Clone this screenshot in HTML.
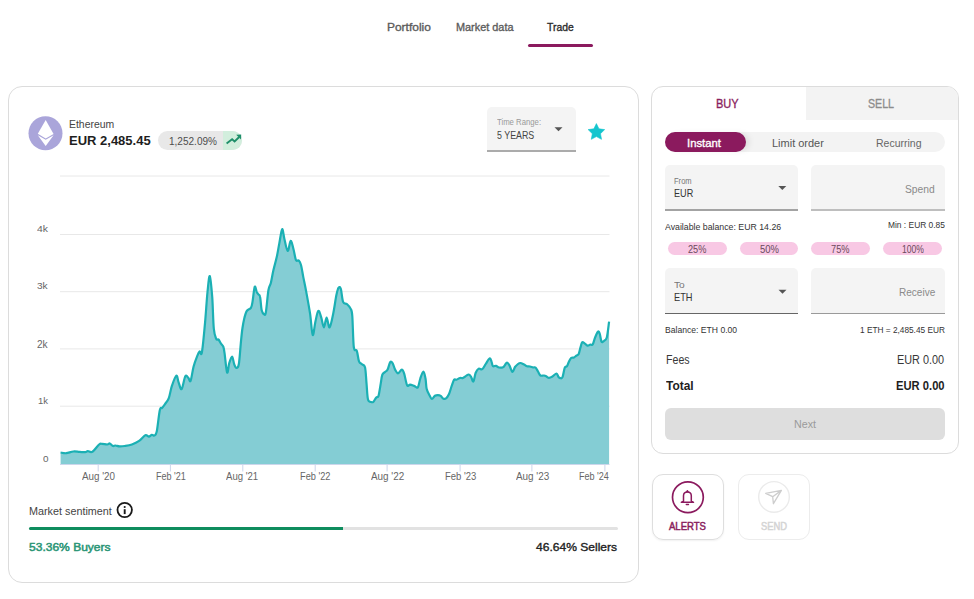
<!DOCTYPE html>
<html><head><meta charset="utf-8">
<style>
html,body{margin:0;padding:0;background:#fff;width:974px;height:599px;overflow:hidden;position:relative;font-family:"Liberation Sans",sans-serif;}
.t{position:absolute;white-space:nowrap;line-height:1;transform-origin:0 0;}
.a{position:absolute;box-sizing:border-box;}
svg{position:absolute;left:0;top:0;}
</style></head><body>
<!-- nav underline -->
<div class="a" style="left:527.5px;top:43.5px;width:65px;height:3px;border-radius:2px;background:#8b1a5e"></div>

<!-- left card -->
<div class="a" style="left:8px;top:86px;width:631px;height:497px;border:1px solid #dcdcdc;border-radius:14px;"></div>

<!-- badge -->
<div class="a" style="left:158.4px;top:130.9px;width:84px;height:19px;border-radius:10px;background:#e8e8e8;overflow:hidden">
  <div class="a" style="left:64.6px;top:0;width:20px;height:19px;background:#d2eedd"></div>
</div>

<!-- time range -->
<div class="a" style="left:487px;top:106.5px;width:88.6px;height:45.5px;background:#f4f4f4;border-radius:5px 5px 0 0;border-bottom:2px solid #ababab"></div>

<!-- market sentiment bars -->
<div class="a" style="left:28.5px;top:526.6px;width:589px;height:3px;border-radius:2px;background:#e2e2e2"></div>
<div class="a" style="left:28.5px;top:526.6px;width:314px;height:3px;border-radius:2px 0 0 2px;background:#0e8d5e"></div>

<!-- right panel -->
<div class="a" style="left:651px;top:86px;width:308px;height:368px;border:1px solid #dcdcdc;border-radius:12px;overflow:hidden">
  <div class="a" style="left:153.5px;top:0;width:160px;height:33px;background:#f3f3f3"></div>
</div>
<!-- segmented -->
<div class="a" style="left:664.7px;top:131.7px;width:280.3px;height:20.6px;border-radius:10.3px;background:#f3f3f3"></div>
<div class="a" style="left:664.7px;top:132.1px;width:81px;height:19.8px;border-radius:10px;background:#8b1a5e;box-shadow:5px 0 6px -2px rgba(0,0,0,0.10)"></div>
<!-- fields -->
<div class="a" style="left:664.9px;top:164.9px;width:133.4px;height:44.3px;background:#f4f4f4;border-radius:5px 5px 0 0"></div>
<div class="a" style="left:664.9px;top:209.2px;width:133.4px;height:1.7px;background:#a3a3a3"></div>
<div class="a" style="left:811.4px;top:164.9px;width:133.6px;height:44.3px;background:#f4f4f4;border-radius:5px 5px 0 0"></div>
<div class="a" style="left:811.4px;top:209.2px;width:133.6px;height:1.7px;background:#bebebe"></div>
<div class="a" style="left:664.9px;top:268.3px;width:133.4px;height:44.3px;background:#f4f4f4;border-radius:5px 5px 0 0"></div>
<div class="a" style="left:664.9px;top:312.6px;width:133.4px;height:1.7px;background:#666"></div>
<div class="a" style="left:811.4px;top:268.3px;width:133.6px;height:44.3px;background:#f4f4f4;border-radius:5px 5px 0 0"></div>
<div class="a" style="left:811.4px;top:312.6px;width:133.6px;height:1.7px;background:#9a9a9a"></div>
<!-- pills -->
<div class="a" style="left:668.2px;top:242.4px;width:58.7px;height:12.8px;border-radius:7px;background:#f8c8e4"></div>
<div class="a" style="left:739.7px;top:242.4px;width:58.7px;height:12.8px;border-radius:7px;background:#f8c8e4"></div>
<div class="a" style="left:811.4px;top:242.4px;width:58.5px;height:12.8px;border-radius:7px;background:#f8c8e4"></div>
<div class="a" style="left:883.1px;top:242.4px;width:58.7px;height:12.8px;border-radius:7px;background:#f8c8e4"></div>
<!-- next -->
<div class="a" style="left:665px;top:407.8px;width:280px;height:32.2px;border-radius:6px;background:#dedede"></div>

<!-- alerts / send -->
<div class="a" style="left:651.7px;top:474px;width:72px;height:66px;border:1px solid #dedede;border-radius:11px;box-shadow:0 1px 2px rgba(0,0,0,0.06)"></div>
<div class="a" style="left:737.9px;top:474px;width:72px;height:66px;border:1px solid #ececec;border-radius:11px;"></div>

<svg width="974" height="599" viewBox="0 0 974 599">
<line x1="60" y1="176" x2="609.5" y2="176" stroke="#e8e8e8" stroke-width="1"/>
<line x1="60" y1="234.5" x2="609.5" y2="234.5" stroke="#e8e8e8" stroke-width="1"/>
<line x1="60" y1="291.7" x2="609.5" y2="291.7" stroke="#e8e8e8" stroke-width="1"/>
<line x1="60" y1="348.9" x2="609.5" y2="348.9" stroke="#e8e8e8" stroke-width="1"/>
<line x1="60" y1="406.2" x2="609.5" y2="406.2" stroke="#e8e8e8" stroke-width="1"/>
<path d="M60.6,452.5 C61.5,452.6 64.1,453.4 66.2,453.2 C68.3,453.0 71.2,451.7 73.4,451.5 C75.6,451.3 77.6,451.8 79.6,451.9 C81.6,452.0 83.8,452.3 85.2,452.2 C86.6,452.1 86.6,451.3 87.8,451.2 C89.0,451.1 90.5,452.8 92.4,451.7 C94.3,450.6 97.5,445.8 99.1,444.5 C100.7,443.2 100.7,443.8 102.1,443.8 C103.5,443.8 106.0,444.6 107.3,444.5 C108.6,444.4 108.9,443.2 109.8,443.5 C110.7,443.8 112.0,445.7 112.9,446.0 C113.9,446.3 114.4,445.4 115.5,445.5 C116.6,445.6 118.1,446.3 119.6,446.4 C121.1,446.5 122.7,446.3 124.7,446.0 C126.8,445.7 129.5,445.4 131.9,444.5 C134.3,443.6 136.9,442.4 139.1,440.9 C141.3,439.4 143.7,436.0 145.3,435.3 C146.9,434.6 147.8,436.7 148.9,436.6 C150.0,436.5 151.0,435.0 151.9,434.8 C152.8,434.6 153.7,436.0 154.5,435.4 C155.3,434.8 155.9,435.4 156.8,431.2 C157.7,427.0 158.9,414.1 159.8,410.2 C160.7,406.3 161.1,408.9 162.0,407.9 C162.9,406.9 163.9,405.7 165.0,404.1 C166.1,402.5 167.7,401.1 168.8,398.1 C169.9,395.1 170.6,389.9 171.8,386.1 C173.1,382.4 175.2,376.2 176.3,375.6 C177.4,375.0 177.7,380.1 178.6,382.3 C179.5,384.6 180.5,390.1 181.6,389.1 C182.7,388.1 184.2,378.2 185.3,376.3 C186.4,374.4 187.4,377.1 188.3,377.8 C189.2,378.6 189.7,382.7 190.6,380.8 C191.5,378.9 192.5,370.6 193.6,366.5 C194.7,362.4 196.1,358.8 197.1,356.3 C198.1,353.8 198.7,352.2 199.5,351.5 C200.3,350.8 201.0,357.2 201.9,352.3 C202.8,347.4 204.2,332.2 205.1,322.1 C206.0,312.1 206.7,299.7 207.5,292.0 C208.3,284.3 209.0,275.3 209.8,276.1 C210.6,276.9 211.5,288.0 212.2,296.7 C212.9,305.4 213.1,321.5 213.8,328.5 C214.5,335.5 215.4,336.9 216.2,338.8 C217.0,340.7 217.8,338.8 218.6,339.6 C219.4,340.4 220.2,342.4 221.0,343.6 C221.8,344.8 222.7,345.1 223.3,346.7 C223.9,348.3 224.0,349.0 224.6,353.3 C225.2,357.6 226.3,370.8 227.1,372.5 C227.9,374.2 228.4,365.9 229.2,363.3 C230.0,360.7 231.3,356.6 232.1,356.7 C232.9,356.8 233.5,362.3 234.2,364.2 C234.9,366.1 235.5,367.9 236.3,367.9 C237.1,367.9 238.1,368.3 238.8,364.2 C239.6,360.1 240.2,349.2 240.8,343.3 C241.4,337.4 241.8,332.6 242.4,328.5 C243.0,324.4 243.5,321.6 244.2,318.7 C244.9,315.8 245.6,312.9 246.7,311.1 C247.8,309.3 249.9,309.3 250.9,307.8 C251.9,306.3 251.9,305.4 252.5,301.9 C253.1,298.4 254.0,288.6 254.7,286.9 C255.4,285.2 256.1,290.6 256.7,291.9 C257.3,293.1 257.8,293.6 258.4,294.4 C259.0,295.2 259.6,294.2 260.1,296.9 C260.7,299.5 261.0,307.4 261.7,310.3 C262.4,313.2 263.5,314.2 264.2,314.5 C264.9,314.8 265.2,316.1 265.9,312.0 C266.6,307.9 267.6,295.1 268.4,290.2 C269.2,285.3 270.1,286.0 270.9,282.7 C271.7,279.4 272.4,274.5 273.4,270.2 C274.4,265.9 275.8,261.3 276.8,256.8 C277.8,252.3 278.4,248.0 279.3,243.4 C280.2,238.8 281.3,230.0 282.1,229.2 C282.9,228.4 283.4,234.8 284.3,238.4 C285.2,242.0 286.6,250.5 287.7,250.9 C288.8,251.3 289.7,241.2 290.7,240.9 C291.7,240.6 292.6,246.1 293.5,249.3 C294.4,252.5 295.1,258.2 296.0,260.1 C296.9,262.0 298.0,259.7 298.8,260.5 C299.6,261.3 300.2,262.2 301.0,265.0 C301.8,267.8 302.4,272.6 303.3,277.1 C304.2,281.6 305.2,286.1 306.3,292.1 C307.4,298.1 308.9,306.1 310.0,313.2 C311.1,320.3 311.8,333.5 312.7,335.0 C313.6,336.5 314.4,326.2 315.3,322.2 C316.2,318.2 317.3,311.6 318.3,310.9 C319.3,310.1 320.4,314.9 321.3,317.7 C322.2,320.4 323.0,327.4 323.9,327.4 C324.8,327.4 325.7,317.7 326.6,317.7 C327.6,317.7 328.5,328.1 329.6,327.4 C330.7,326.6 332.2,318.6 333.3,313.2 C334.4,307.8 335.5,299.4 336.4,295.1 C337.3,290.8 337.9,288.6 338.6,287.6 C339.4,286.6 340.1,286.7 340.9,289.1 C341.6,291.5 342.1,299.4 343.1,301.9 C344.1,304.4 345.6,303.0 346.9,304.1 C348.1,305.2 349.7,306.6 350.6,308.6 C351.5,310.6 351.8,309.6 352.3,316.0 C352.8,322.4 353.1,341.2 353.8,347.0 C354.6,352.8 355.9,348.4 356.8,350.8 C357.7,353.2 358.1,359.1 359.0,361.3 C359.9,363.6 361.0,363.3 362.0,364.3 C363.0,365.3 364.2,364.2 365.0,367.3 C365.8,370.4 366.0,377.7 366.5,383.1 C367.0,388.5 367.2,396.5 368.0,399.6 C368.8,402.7 370.1,401.5 371.0,401.9 C371.9,402.3 372.4,402.6 373.3,401.9 C374.2,401.1 375.4,398.4 376.3,397.4 C377.2,396.4 377.8,398.3 378.5,395.9 C379.2,393.5 380.2,386.6 380.8,383.1 C381.4,379.6 381.6,376.7 382.3,374.8 C383.1,372.9 384.4,372.7 385.3,371.8 C386.2,370.9 386.8,371.2 387.6,369.6 C388.4,368.0 389.4,363.1 390.3,362.1 C391.2,361.1 392.0,362.4 392.8,363.6 C393.6,364.9 394.2,368.0 395.1,369.6 C396.0,371.2 397.0,373.3 398.1,373.3 C399.2,373.3 400.8,369.6 401.8,369.6 C402.8,369.6 403.2,370.7 404.1,373.3 C405.0,375.9 406.1,383.4 407.1,385.3 C408.1,387.2 408.9,384.5 410.1,384.6 C411.4,384.7 413.3,385.7 414.6,386.1 C415.9,386.6 416.9,388.6 417.9,387.3 C418.8,386.0 419.4,381.1 420.3,378.5 C421.2,375.9 422.5,371.5 423.4,371.5 C424.3,371.5 424.9,375.6 425.5,378.5 C426.1,381.4 426.0,386.3 426.7,389.1 C427.4,391.9 428.7,393.9 429.6,395.5 C430.5,397.1 431.0,398.9 431.9,399.0 C432.8,399.1 433.9,396.4 434.9,395.8 C435.9,395.2 436.8,395.1 437.8,395.1 C438.8,395.1 439.8,395.2 440.7,395.8 C441.6,396.4 442.1,398.0 443.0,398.4 C443.9,398.8 445.0,399.1 446.0,398.4 C447.0,397.7 447.9,396.4 448.9,394.3 C449.9,392.2 450.9,388.0 451.8,385.6 C452.7,383.2 453.3,380.7 454.1,379.7 C454.9,378.7 455.5,380.0 456.5,379.7 C457.5,379.4 458.9,378.3 460.0,378.0 C461.1,377.7 461.8,378.4 462.9,378.0 C464.0,377.6 465.4,376.2 466.4,375.6 C467.4,375.0 467.9,374.3 468.7,374.5 C469.5,374.7 470.3,375.6 471.1,376.8 C471.9,378.0 472.6,382.2 473.4,381.5 C474.2,380.8 474.8,374.8 475.7,372.7 C476.6,370.6 477.6,369.2 478.7,368.6 C479.8,368.0 481.0,370.0 482.2,369.2 C483.4,368.4 484.5,365.8 485.7,364.0 C486.9,362.2 488.5,358.9 489.5,358.5 C490.5,358.1 490.9,360.3 491.5,361.6 C492.1,362.9 492.2,365.5 493.0,366.2 C493.8,366.9 495.0,365.6 496.0,365.8 C497.0,366.0 497.8,367.3 499.0,367.5 C500.2,367.7 502.0,367.6 503.0,367.2 C504.0,366.8 504.3,365.8 505.0,365.0 C505.7,364.2 506.2,362.4 507.0,362.5 C507.8,362.6 508.6,363.9 509.5,365.5 C510.4,367.1 511.6,371.8 512.5,372.0 C513.4,372.2 514.1,368.3 515.0,367.0 C515.9,365.7 517.1,364.7 518.0,364.0 C518.9,363.3 519.5,362.9 520.5,363.0 C521.5,363.1 522.9,364.0 524.0,364.5 C525.1,365.0 526.0,365.9 527.0,366.2 C528.0,366.5 529.0,366.3 530.0,366.5 C531.0,366.7 532.1,367.3 533.0,367.5 C533.9,367.7 534.7,366.8 535.5,367.5 C536.3,368.2 537.2,370.2 538.0,371.5 C538.8,372.8 539.5,374.8 540.5,375.5 C541.5,376.2 543.0,375.3 544.0,375.5 C545.0,375.7 545.7,376.1 546.5,376.5 C547.3,376.9 548.0,377.8 549.0,377.8 C550.0,377.8 551.2,377.2 552.5,376.5 C553.8,375.8 555.5,373.4 556.5,373.5 C557.5,373.6 557.8,376.2 558.5,377.0 C559.2,377.8 559.8,378.2 560.5,378.2 C561.2,378.2 561.8,378.9 562.5,377.2 C563.2,375.5 564.0,369.8 564.7,367.9 C565.5,366.0 566.3,367.1 567.0,366.1 C567.7,365.1 568.1,363.4 568.8,362.0 C569.5,360.6 570.2,358.8 571.1,358.0 C572.0,357.2 573.1,357.8 574.0,357.4 C574.9,357.0 575.6,356.2 576.4,355.6 C577.2,355.0 578.0,355.3 578.7,353.9 C579.4,352.5 579.9,349.3 580.5,347.4 C581.1,345.4 581.5,342.9 582.2,342.2 C582.9,341.5 583.7,342.7 584.6,343.3 C585.5,343.9 586.5,345.5 587.5,345.7 C588.5,345.9 589.5,344.7 590.4,344.5 C591.3,344.3 591.9,345.7 592.7,344.5 C593.5,343.3 594.2,339.6 595.1,337.5 C596.0,335.4 597.2,332.2 598.0,331.6 C598.8,331.0 599.2,332.3 599.8,334.0 C600.4,335.7 600.8,340.4 601.5,341.6 C602.2,342.8 603.0,341.7 603.9,341.0 C604.8,340.3 605.9,340.7 606.8,337.5 C607.7,334.3 608.7,324.3 609.1,321.7 L609.1,464 L60.6,464 Z" fill="#84cdd4"/>
<path d="M60.6,452.5 C61.5,452.6 64.1,453.4 66.2,453.2 C68.3,453.0 71.2,451.7 73.4,451.5 C75.6,451.3 77.6,451.8 79.6,451.9 C81.6,452.0 83.8,452.3 85.2,452.2 C86.6,452.1 86.6,451.3 87.8,451.2 C89.0,451.1 90.5,452.8 92.4,451.7 C94.3,450.6 97.5,445.8 99.1,444.5 C100.7,443.2 100.7,443.8 102.1,443.8 C103.5,443.8 106.0,444.6 107.3,444.5 C108.6,444.4 108.9,443.2 109.8,443.5 C110.7,443.8 112.0,445.7 112.9,446.0 C113.9,446.3 114.4,445.4 115.5,445.5 C116.6,445.6 118.1,446.3 119.6,446.4 C121.1,446.5 122.7,446.3 124.7,446.0 C126.8,445.7 129.5,445.4 131.9,444.5 C134.3,443.6 136.9,442.4 139.1,440.9 C141.3,439.4 143.7,436.0 145.3,435.3 C146.9,434.6 147.8,436.7 148.9,436.6 C150.0,436.5 151.0,435.0 151.9,434.8 C152.8,434.6 153.7,436.0 154.5,435.4 C155.3,434.8 155.9,435.4 156.8,431.2 C157.7,427.0 158.9,414.1 159.8,410.2 C160.7,406.3 161.1,408.9 162.0,407.9 C162.9,406.9 163.9,405.7 165.0,404.1 C166.1,402.5 167.7,401.1 168.8,398.1 C169.9,395.1 170.6,389.9 171.8,386.1 C173.1,382.4 175.2,376.2 176.3,375.6 C177.4,375.0 177.7,380.1 178.6,382.3 C179.5,384.6 180.5,390.1 181.6,389.1 C182.7,388.1 184.2,378.2 185.3,376.3 C186.4,374.4 187.4,377.1 188.3,377.8 C189.2,378.6 189.7,382.7 190.6,380.8 C191.5,378.9 192.5,370.6 193.6,366.5 C194.7,362.4 196.1,358.8 197.1,356.3 C198.1,353.8 198.7,352.2 199.5,351.5 C200.3,350.8 201.0,357.2 201.9,352.3 C202.8,347.4 204.2,332.2 205.1,322.1 C206.0,312.1 206.7,299.7 207.5,292.0 C208.3,284.3 209.0,275.3 209.8,276.1 C210.6,276.9 211.5,288.0 212.2,296.7 C212.9,305.4 213.1,321.5 213.8,328.5 C214.5,335.5 215.4,336.9 216.2,338.8 C217.0,340.7 217.8,338.8 218.6,339.6 C219.4,340.4 220.2,342.4 221.0,343.6 C221.8,344.8 222.7,345.1 223.3,346.7 C223.9,348.3 224.0,349.0 224.6,353.3 C225.2,357.6 226.3,370.8 227.1,372.5 C227.9,374.2 228.4,365.9 229.2,363.3 C230.0,360.7 231.3,356.6 232.1,356.7 C232.9,356.8 233.5,362.3 234.2,364.2 C234.9,366.1 235.5,367.9 236.3,367.9 C237.1,367.9 238.1,368.3 238.8,364.2 C239.6,360.1 240.2,349.2 240.8,343.3 C241.4,337.4 241.8,332.6 242.4,328.5 C243.0,324.4 243.5,321.6 244.2,318.7 C244.9,315.8 245.6,312.9 246.7,311.1 C247.8,309.3 249.9,309.3 250.9,307.8 C251.9,306.3 251.9,305.4 252.5,301.9 C253.1,298.4 254.0,288.6 254.7,286.9 C255.4,285.2 256.1,290.6 256.7,291.9 C257.3,293.1 257.8,293.6 258.4,294.4 C259.0,295.2 259.6,294.2 260.1,296.9 C260.7,299.5 261.0,307.4 261.7,310.3 C262.4,313.2 263.5,314.2 264.2,314.5 C264.9,314.8 265.2,316.1 265.9,312.0 C266.6,307.9 267.6,295.1 268.4,290.2 C269.2,285.3 270.1,286.0 270.9,282.7 C271.7,279.4 272.4,274.5 273.4,270.2 C274.4,265.9 275.8,261.3 276.8,256.8 C277.8,252.3 278.4,248.0 279.3,243.4 C280.2,238.8 281.3,230.0 282.1,229.2 C282.9,228.4 283.4,234.8 284.3,238.4 C285.2,242.0 286.6,250.5 287.7,250.9 C288.8,251.3 289.7,241.2 290.7,240.9 C291.7,240.6 292.6,246.1 293.5,249.3 C294.4,252.5 295.1,258.2 296.0,260.1 C296.9,262.0 298.0,259.7 298.8,260.5 C299.6,261.3 300.2,262.2 301.0,265.0 C301.8,267.8 302.4,272.6 303.3,277.1 C304.2,281.6 305.2,286.1 306.3,292.1 C307.4,298.1 308.9,306.1 310.0,313.2 C311.1,320.3 311.8,333.5 312.7,335.0 C313.6,336.5 314.4,326.2 315.3,322.2 C316.2,318.2 317.3,311.6 318.3,310.9 C319.3,310.1 320.4,314.9 321.3,317.7 C322.2,320.4 323.0,327.4 323.9,327.4 C324.8,327.4 325.7,317.7 326.6,317.7 C327.6,317.7 328.5,328.1 329.6,327.4 C330.7,326.6 332.2,318.6 333.3,313.2 C334.4,307.8 335.5,299.4 336.4,295.1 C337.3,290.8 337.9,288.6 338.6,287.6 C339.4,286.6 340.1,286.7 340.9,289.1 C341.6,291.5 342.1,299.4 343.1,301.9 C344.1,304.4 345.6,303.0 346.9,304.1 C348.1,305.2 349.7,306.6 350.6,308.6 C351.5,310.6 351.8,309.6 352.3,316.0 C352.8,322.4 353.1,341.2 353.8,347.0 C354.6,352.8 355.9,348.4 356.8,350.8 C357.7,353.2 358.1,359.1 359.0,361.3 C359.9,363.6 361.0,363.3 362.0,364.3 C363.0,365.3 364.2,364.2 365.0,367.3 C365.8,370.4 366.0,377.7 366.5,383.1 C367.0,388.5 367.2,396.5 368.0,399.6 C368.8,402.7 370.1,401.5 371.0,401.9 C371.9,402.3 372.4,402.6 373.3,401.9 C374.2,401.1 375.4,398.4 376.3,397.4 C377.2,396.4 377.8,398.3 378.5,395.9 C379.2,393.5 380.2,386.6 380.8,383.1 C381.4,379.6 381.6,376.7 382.3,374.8 C383.1,372.9 384.4,372.7 385.3,371.8 C386.2,370.9 386.8,371.2 387.6,369.6 C388.4,368.0 389.4,363.1 390.3,362.1 C391.2,361.1 392.0,362.4 392.8,363.6 C393.6,364.9 394.2,368.0 395.1,369.6 C396.0,371.2 397.0,373.3 398.1,373.3 C399.2,373.3 400.8,369.6 401.8,369.6 C402.8,369.6 403.2,370.7 404.1,373.3 C405.0,375.9 406.1,383.4 407.1,385.3 C408.1,387.2 408.9,384.5 410.1,384.6 C411.4,384.7 413.3,385.7 414.6,386.1 C415.9,386.6 416.9,388.6 417.9,387.3 C418.8,386.0 419.4,381.1 420.3,378.5 C421.2,375.9 422.5,371.5 423.4,371.5 C424.3,371.5 424.9,375.6 425.5,378.5 C426.1,381.4 426.0,386.3 426.7,389.1 C427.4,391.9 428.7,393.9 429.6,395.5 C430.5,397.1 431.0,398.9 431.9,399.0 C432.8,399.1 433.9,396.4 434.9,395.8 C435.9,395.2 436.8,395.1 437.8,395.1 C438.8,395.1 439.8,395.2 440.7,395.8 C441.6,396.4 442.1,398.0 443.0,398.4 C443.9,398.8 445.0,399.1 446.0,398.4 C447.0,397.7 447.9,396.4 448.9,394.3 C449.9,392.2 450.9,388.0 451.8,385.6 C452.7,383.2 453.3,380.7 454.1,379.7 C454.9,378.7 455.5,380.0 456.5,379.7 C457.5,379.4 458.9,378.3 460.0,378.0 C461.1,377.7 461.8,378.4 462.9,378.0 C464.0,377.6 465.4,376.2 466.4,375.6 C467.4,375.0 467.9,374.3 468.7,374.5 C469.5,374.7 470.3,375.6 471.1,376.8 C471.9,378.0 472.6,382.2 473.4,381.5 C474.2,380.8 474.8,374.8 475.7,372.7 C476.6,370.6 477.6,369.2 478.7,368.6 C479.8,368.0 481.0,370.0 482.2,369.2 C483.4,368.4 484.5,365.8 485.7,364.0 C486.9,362.2 488.5,358.9 489.5,358.5 C490.5,358.1 490.9,360.3 491.5,361.6 C492.1,362.9 492.2,365.5 493.0,366.2 C493.8,366.9 495.0,365.6 496.0,365.8 C497.0,366.0 497.8,367.3 499.0,367.5 C500.2,367.7 502.0,367.6 503.0,367.2 C504.0,366.8 504.3,365.8 505.0,365.0 C505.7,364.2 506.2,362.4 507.0,362.5 C507.8,362.6 508.6,363.9 509.5,365.5 C510.4,367.1 511.6,371.8 512.5,372.0 C513.4,372.2 514.1,368.3 515.0,367.0 C515.9,365.7 517.1,364.7 518.0,364.0 C518.9,363.3 519.5,362.9 520.5,363.0 C521.5,363.1 522.9,364.0 524.0,364.5 C525.1,365.0 526.0,365.9 527.0,366.2 C528.0,366.5 529.0,366.3 530.0,366.5 C531.0,366.7 532.1,367.3 533.0,367.5 C533.9,367.7 534.7,366.8 535.5,367.5 C536.3,368.2 537.2,370.2 538.0,371.5 C538.8,372.8 539.5,374.8 540.5,375.5 C541.5,376.2 543.0,375.3 544.0,375.5 C545.0,375.7 545.7,376.1 546.5,376.5 C547.3,376.9 548.0,377.8 549.0,377.8 C550.0,377.8 551.2,377.2 552.5,376.5 C553.8,375.8 555.5,373.4 556.5,373.5 C557.5,373.6 557.8,376.2 558.5,377.0 C559.2,377.8 559.8,378.2 560.5,378.2 C561.2,378.2 561.8,378.9 562.5,377.2 C563.2,375.5 564.0,369.8 564.7,367.9 C565.5,366.0 566.3,367.1 567.0,366.1 C567.7,365.1 568.1,363.4 568.8,362.0 C569.5,360.6 570.2,358.8 571.1,358.0 C572.0,357.2 573.1,357.8 574.0,357.4 C574.9,357.0 575.6,356.2 576.4,355.6 C577.2,355.0 578.0,355.3 578.7,353.9 C579.4,352.5 579.9,349.3 580.5,347.4 C581.1,345.4 581.5,342.9 582.2,342.2 C582.9,341.5 583.7,342.7 584.6,343.3 C585.5,343.9 586.5,345.5 587.5,345.7 C588.5,345.9 589.5,344.7 590.4,344.5 C591.3,344.3 591.9,345.7 592.7,344.5 C593.5,343.3 594.2,339.6 595.1,337.5 C596.0,335.4 597.2,332.2 598.0,331.6 C598.8,331.0 599.2,332.3 599.8,334.0 C600.4,335.7 600.8,340.4 601.5,341.6 C602.2,342.8 603.0,341.7 603.9,341.0 C604.8,340.3 605.9,340.7 606.8,337.5 C607.7,334.3 608.7,324.3 609.1,321.7" fill="none" stroke="#1bb0b4" stroke-width="2.2" stroke-linejoin="round"/>
<line x1="60" y1="464.5" x2="609.5" y2="464.5" stroke="#ccd6eb" stroke-width="1"/>
<line x1="98.2" y1="464.5" x2="98.2" y2="471.5" stroke="#ccd6eb" stroke-width="1"/>
<line x1="170.4" y1="464.5" x2="170.4" y2="471.5" stroke="#ccd6eb" stroke-width="1"/>
<line x1="242.8" y1="464.5" x2="242.8" y2="471.5" stroke="#ccd6eb" stroke-width="1"/>
<line x1="315.2" y1="464.5" x2="315.2" y2="471.5" stroke="#ccd6eb" stroke-width="1"/>
<line x1="387.1" y1="464.5" x2="387.1" y2="471.5" stroke="#ccd6eb" stroke-width="1"/>
<line x1="460.1" y1="464.5" x2="460.1" y2="471.5" stroke="#ccd6eb" stroke-width="1"/>
<line x1="531.9" y1="464.5" x2="531.9" y2="471.5" stroke="#ccd6eb" stroke-width="1"/>
<line x1="604.9" y1="464.5" x2="604.9" y2="471.5" stroke="#ccd6eb" stroke-width="1"/>
<circle cx="45.5" cy="133.2" r="17" fill="#aaa5da"/>
<path d="M45.7,120 L37.8,133.7 L45.7,138.4 L53.6,134 Z" fill="#fff"/>
<path d="M37.8,135.3 L45.7,139.7 L53.6,135.3 L45.7,146 Z" fill="#fff"/>
<path d="M226.6,143.4 L232.1,139.2 L234.6,141.4 L239.2,137" fill="none" stroke="#1f8f6a" stroke-width="1.9"/>
<path d="M236.2,134.8 L241.2,134.6 L241,139.6 Z" fill="#1f8f6a"/>
<path d="M554.5,127.3 L562.5,127.3 L558.5,131.3 Z" fill="#555"/>
<path d="M778.3,185.9 L786.3,185.9 L782.3,189.9 Z" fill="#555"/>
<path d="M778.5,289.8 L786.5,289.8 L782.5,293.8 Z" fill="#555"/>
<path d="M596.40,123.60 L598.93,128.82 L604.67,129.61 L600.49,133.63 L601.51,139.34 L596.40,136.60 L591.29,139.34 L592.31,133.63 L588.13,129.61 L593.87,128.82 Z" fill="#14c5ce" stroke="#14c5ce" stroke-width="0.6" stroke-linejoin="round"/>
<circle cx="124.7" cy="510" r="7.2" fill="none" stroke="#1a1a1a" stroke-width="1.8"/>
<rect x="123.75" y="509.2" width="1.9" height="4.9" fill="#1a1a1a"/><circle cx="124.7" cy="507" r="1.05" fill="#1a1a1a"/>
<circle cx="687.9" cy="497.2" r="15.4" fill="none" stroke="#8b1a5e" stroke-width="1.7"/>
<path d="M683.5,501 L683.5,495.8 C683.5,493.2 685.2,491.9 687.4,491.9 C689.6,491.9 691.3,493.2 691.3,495.8 L691.3,501 L693.5,502.3 L681.3,502.3 Z" fill="none" stroke="#8b1a5e" stroke-width="1.5" stroke-linejoin="round"/>
<path d="M686.4,492 L687.4,490 L688.4,492 Z" fill="#8b1a5e" stroke="#8b1a5e" stroke-width="0.8"/>
<path d="M686.3,504.5 L688.5,504.5" stroke="#8b1a5e" stroke-width="1.4" stroke-linecap="round"/>
<circle cx="774" cy="496.9" r="15.3" fill="none" stroke="#ebebeb" stroke-width="1.4"/>
<path d="M765.7,493.4 L781.4,490.4 L773.4,503.7 L772.7,496.7 Z M772.7,496.7 L781.4,490.4" fill="none" stroke="#cdcdcd" stroke-width="1.3" stroke-linejoin="round"/>
</svg>
<div class="t" style="left:387.40px;top:21.92px;font-size:11.19px;font-weight:400;color:#5c5c5c;-webkit-text-stroke:0.35px #5c5c5c;transform:scaleX(1.0681)" id="t0">Portfolio</div>
<div class="t" style="left:456.30px;top:21.92px;font-size:11.19px;font-weight:400;color:#5c5c5c;-webkit-text-stroke:0.35px #5c5c5c;transform:scaleX(0.9729)" id="t1">Market data</div>
<div class="t" style="left:546.70px;top:21.92px;font-size:11.19px;font-weight:400;color:#2b2b2b;-webkit-text-stroke:0.35px #2b2b2b;transform:scaleX(0.9265)" id="t2">Trade</div>
<div class="t" style="left:69.10px;top:119.54px;font-size:10.47px;font-weight:400;color:#444;transform:scaleX(0.9963)" id="t3">Ethereum</div>
<div class="t" style="left:69.20px;top:135.27px;font-size:12.79px;font-weight:700;color:#1e1e1e;transform:scaleX(1.0168)" id="t4">EUR 2,485.45</div>
<div class="t" style="left:168.70px;top:137.06px;font-size:10.32px;font-weight:400;color:#4d4d4d;transform:scaleX(0.9727)" id="t5">1,252.09%</div>
<div class="t" style="left:497.00px;top:118.06px;font-size:8.43px;font-weight:400;color:#9a9a9a;transform:scaleX(0.9197)" id="t6">Time Range:</div>
<div class="t" style="left:497.00px;top:129.57px;font-size:10.90px;font-weight:400;color:#444;transform:scaleX(0.8135)" id="t7">5 YEARS</div>
<div class="t" style="left:28.60px;top:506.01px;font-size:10.61px;font-weight:400;color:#444;transform:scaleX(1.0176)" id="t8">Market sentiment</div>
<div class="t" style="left:28.60px;top:541.52px;font-size:11.19px;font-weight:400;color:#2a9575;-webkit-text-stroke:0.5px #2a9575;transform:scaleX(1.0751)" id="t9">53.36% Buyers</div>
<div class="t" style="left:535.90px;top:541.82px;font-size:11.19px;font-weight:400;color:#222;-webkit-text-stroke:0.35px #222;transform:scaleX(1.0774)" id="t10">46.64% Sellers</div>
<div class="t" style="left:715.80px;top:97.51px;font-size:12.50px;font-weight:400;color:#8a1f5e;-webkit-text-stroke:0.35px #8a1f5e;transform:scaleX(0.8794)" id="t11">BUY</div>
<div class="t" style="left:868.30px;top:97.51px;font-size:12.50px;font-weight:400;color:#8c8c8c;-webkit-text-stroke:0.35px #8c8c8c;transform:scaleX(0.8504)" id="t12">SELL</div>
<div class="t" style="left:687.00px;top:136.65px;font-size:11.63px;font-weight:400;color:#ffffff;-webkit-text-stroke:0.35px #ffffff;transform:scaleX(0.9749)" id="t13">Instant</div>
<div class="t" style="left:772.30px;top:136.65px;font-size:11.63px;font-weight:400;color:#555;transform:scaleX(0.9448)" id="t14">Limit order</div>
<div class="t" style="left:875.70px;top:136.65px;font-size:11.63px;font-weight:400;color:#666;transform:scaleX(0.9027)" id="t15">Recurring</div>
<div class="t" style="left:673.90px;top:177.93px;font-size:8.28px;font-weight:400;color:#777;transform:scaleX(0.9157)" id="t16">From</div>
<div class="t" style="left:673.90px;top:188.29px;font-size:10.76px;font-weight:400;color:#333;transform:scaleX(0.8456)" id="t17">EUR</div>
<div class="t" style="left:904.70px;top:184.44px;font-size:11.05px;font-weight:400;color:#8a8a8a;transform:scaleX(0.9297)" id="t18">Spend</div>
<div class="t" style="left:664.60px;top:221.97px;font-size:9.59px;font-weight:400;color:#333;transform:scaleX(0.9137)" id="t19">Available balance: EUR 14.26</div>
<div class="t" style="left:887.80px;top:219.80px;font-size:9.45px;font-weight:400;color:#333;transform:scaleX(0.8899)" id="t20">Min : EUR 0.85</div>
<div class="t" style="left:688.00px;top:244.88px;font-size:10.17px;font-weight:400;color:#6b4a5c;transform:scaleX(0.9038)" id="t21">25%</div>
<div class="t" style="left:759.50px;top:244.88px;font-size:10.17px;font-weight:400;color:#6b4a5c;transform:scaleX(0.9332)" id="t22">50%</div>
<div class="t" style="left:831.00px;top:244.88px;font-size:10.17px;font-weight:400;color:#6b4a5c;transform:scaleX(0.9087)" id="t23">75%</div>
<div class="t" style="left:901.50px;top:244.88px;font-size:10.17px;font-weight:400;color:#6b4a5c;transform:scaleX(0.8453)" id="t24">100%</div>
<div class="t" style="left:673.70px;top:281.53px;font-size:8.28px;font-weight:400;color:#777;transform:scaleX(1.2344)" id="t25">To</div>
<div class="t" style="left:673.90px;top:291.89px;font-size:10.76px;font-weight:400;color:#333;transform:scaleX(0.8600)" id="t26">ETH</div>
<div class="t" style="left:898.50px;top:286.64px;font-size:11.05px;font-weight:400;color:#8a8a8a;transform:scaleX(0.9095)" id="t27">Receive</div>
<div class="t" style="left:664.90px;top:324.75px;font-size:9.45px;font-weight:400;color:#333;transform:scaleX(0.9104)" id="t28">Balance: ETH 0.00</div>
<div class="t" style="left:859.90px;top:324.75px;font-size:9.45px;font-weight:400;color:#333;transform:scaleX(0.8773)" id="t29">1 ETH = 2,485.45 EUR</div>
<div class="t" style="left:665.60px;top:353.87px;font-size:12.79px;font-weight:400;color:#383838;transform:scaleX(0.8300)" id="t30">Fees</div>
<div class="t" style="left:897.20px;top:353.87px;font-size:12.79px;font-weight:400;color:#383838;transform:scaleX(0.8494)" id="t31">EUR 0.00</div>
<div class="t" style="left:665.60px;top:380.01px;font-size:12.50px;font-weight:700;color:#1e1e1e;transform:scaleX(0.9550)" id="t32">Total</div>
<div class="t" style="left:895.70px;top:380.01px;font-size:12.50px;font-weight:700;color:#1e1e1e;transform:scaleX(0.8969)" id="t33">EUR 0.00</div>
<div class="t" style="left:793.60px;top:418.15px;font-size:11.63px;font-weight:400;color:#9a9a9a;transform:scaleX(0.9202)" id="t34">Next</div>
<div class="t" style="left:669.00px;top:521.09px;font-size:10.76px;font-weight:400;color:#8a1f5e;-webkit-text-stroke:0.5px #8a1f5e;transform:scaleX(0.8884)" id="t35">ALERTS</div>
<div class="t" style="left:760.50px;top:521.09px;font-size:10.76px;font-weight:400;color:#d4d4d4;-webkit-text-stroke:0.5px #d4d4d4;transform:scaleX(0.8702)" id="t36">SEND</div>
<div class="t" style="left:37.00px;top:224.35px;font-size:9.74px;font-weight:400;color:#666;transform:scaleX(1.0676)" id="t37">4k</div>
<div class="t" style="left:37.30px;top:281.45px;font-size:9.74px;font-weight:400;color:#666;transform:scaleX(1.0385)" id="t38">3k</div>
<div class="t" style="left:37.30px;top:340.21px;font-size:10.03px;font-weight:400;color:#666;transform:scaleX(1.0084)" id="t39">2k</div>
<div class="t" style="left:38.00px;top:395.75px;font-size:9.45px;font-weight:400;color:#666;transform:scaleX(1.0004)" id="t40">1k</div>
<div class="t" style="left:42.50px;top:454.59px;font-size:8.87px;font-weight:400;color:#666;transform:scaleX(1.1157)" id="t41">0</div>
<div class="t" style="left:82.10px;top:472.06px;font-size:10.03px;font-weight:400;color:#666;transform:scaleX(0.9823)" id="t42">Aug '20</div>
<div class="t" style="left:155.70px;top:472.06px;font-size:10.03px;font-weight:400;color:#666;transform:scaleX(0.9023)" id="t43">Feb '21</div>
<div class="t" style="left:226.10px;top:472.06px;font-size:10.03px;font-weight:400;color:#666;transform:scaleX(0.9556)" id="t44">Aug '21</div>
<div class="t" style="left:300.30px;top:472.06px;font-size:10.03px;font-weight:400;color:#666;transform:scaleX(0.9204)" id="t45">Feb '22</div>
<div class="t" style="left:370.80px;top:472.06px;font-size:10.03px;font-weight:400;color:#666;transform:scaleX(0.9882)" id="t46">Aug '22</div>
<div class="t" style="left:444.70px;top:472.06px;font-size:10.03px;font-weight:400;color:#666;transform:scaleX(0.9476)" id="t47">Feb '23</div>
<div class="t" style="left:515.50px;top:472.06px;font-size:10.03px;font-weight:400;color:#666;transform:scaleX(0.9882)" id="t48">Aug '23</div>
<div class="t" style="left:578.70px;top:472.06px;font-size:10.03px;font-weight:400;color:#666;transform:scaleX(0.9023)" id="t49">Feb '24</div>
</body></html>
